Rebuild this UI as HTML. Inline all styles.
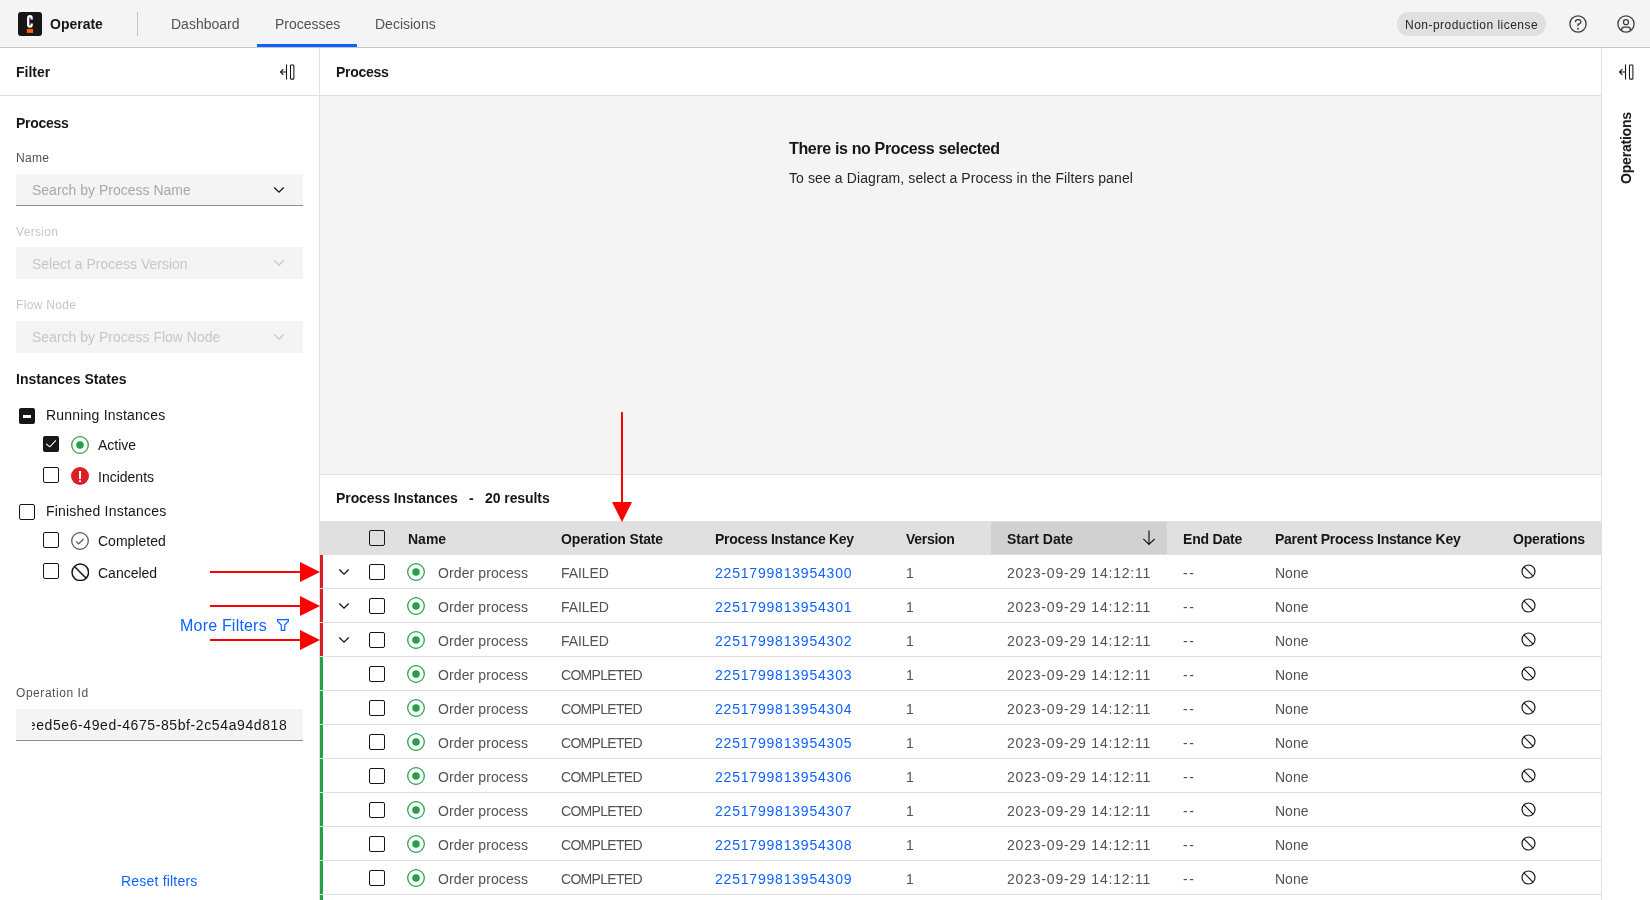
<!DOCTYPE html>
<html><head><meta charset="utf-8"><title>Operate</title>
<style>
html,body{margin:0;padding:0;width:1650px;height:900px;overflow:hidden;background:#fff;font-family:"Liberation Sans", sans-serif;}
.t{position:absolute;white-space:nowrap;will-change:transform;}
svg{display:block}
</style></head><body>
<div style="position:absolute;left:0;top:0;width:1650px;height:47px;background:#f4f4f4"></div>
<div style="position:absolute;left:0;top:47px;width:1650px;height:1px;background:#c6c6c6"></div>
<div style="position:absolute;left:18px;top:12px;width:24px;height:24px;background:#161616;border-radius:3px"></div>
<svg style="position:absolute;left:18px;top:12px" width="24" height="24" viewBox="0 0 24 24"><path d="M11.95 3.1c-1.9 0-2.9 1.2-2.9 3.3v6.1c0 2.1 1 3.3 2.9 3.3 1.9 0 2.9-1.2 2.9-3.3v-1.1h-2.3v1.3c0 .6-.2.9-.6.9s-.6-.3-.6-.9V6.2c0-.6.2-.9.6-.9s.6.3.6.9v1.4h2.3V6.4c0-2.1-1-3.3-2.9-3.3z" fill="#fff"/><rect x="8.9" y="16.9" width="6.2" height="4" fill="#fc5d0d"/></svg>
<div class="t" style="left:50px;top:14.15px;font-size:14px;line-height:20px;font-weight:700;color:#161616;letter-spacing:0px;">Operate</div>
<div style="position:absolute;left:137px;top:12px;width:1px;height:24px;background:#c6c6c6"></div>
<div class="t" style="left:171px;top:14.15px;font-size:14px;line-height:20px;font-weight:400;color:#525252;letter-spacing:0px;">Dashboard</div>
<div class="t" style="left:275px;top:14.15px;font-size:14px;line-height:20px;font-weight:400;color:#525252;letter-spacing:0px;">Processes</div>
<div class="t" style="left:375px;top:14.15px;font-size:14px;line-height:20px;font-weight:400;color:#525252;letter-spacing:0px;">Decisions</div>
<div style="position:absolute;left:257px;top:44px;width:100px;height:3px;background:#0f62fe"></div>
<div style="position:absolute;left:1397px;top:12px;width:149px;height:24px;background:#e0e0e0;border-radius:12px"></div>
<div class="t" style="left:1405px;top:17.34px;font-size:12px;line-height:16px;font-weight:400;color:#262626;letter-spacing:0.47px;">Non-production license</div>
<svg style="position:absolute;left:1568px;top:14px" width="20" height="20" viewBox="0 0 32 32" fill="#393939"><path d="M16,2A14,14,0,1,0,30,16,14,14,0,0,0,16,2Zm0,26A12,12,0,1,1,28,16,12,12,0,0,1,16,28Z"/><circle cx="16" cy="23.5" r="1.5"/><path d="M17,8H15.5A4.48,4.48,0,0,0,11,12.5V13h2v-.5A2.5,2.5,0,0,1,15.5,10H17a2.5,2.5,0,0,1,0,5H15v4.5h2V17a4.5,4.5,0,0,0,0-9Z"/></svg>
<svg style="position:absolute;left:1616px;top:14px" width="20" height="20" viewBox="0 0 32 32" fill="#393939"><path d="M16,8a5,5,0,1,0,5,5A5,5,0,0,0,16,8Zm0,8a3,3,0,1,1,3-3A3.0034,3.0034,0,0,1,16,16Z"/><path d="M16,2A14,14,0,1,0,30,16,14.0158,14.0158,0,0,0,16,2ZM10,26.3765V25a3.0033,3.0033,0,0,1,3-3h6a3.0033,3.0033,0,0,1,3,3v1.3765a11.8989,11.8989,0,0,1-12,0Zm13.9925-1.4507A5.0016,5.0016,0,0,0,19,20H13a5.0016,5.0016,0,0,0-4.9925,4.9258,12,12,0,1,1,15.985,0Z"/></svg>
<div style="position:absolute;left:0;top:48px;width:319px;height:852px;background:#fff"></div>
<div style="position:absolute;left:319px;top:48px;width:1px;height:852px;background:#e0e0e0"></div>
<div style="position:absolute;left:0;top:95px;width:319px;height:1px;background:#e0e0e0"></div>
<div class="t" style="left:16px;top:62.15px;font-size:14px;line-height:20px;font-weight:700;color:#161616;letter-spacing:0px;">Filter</div>
<svg style="position:absolute;left:280px;top:64px" width="16" height="16" viewBox="0 0 16 16" fill="none" stroke="#161616"><path d="M6.5 0.4v15.2" stroke-width="1.1"/><path d="M6.5 8H0.8M3.4 5.2L0.6 8l2.8 2.8" stroke-width="1.1"/><rect x="10.5" y="0.9" width="3.4" height="14.2" rx="0.6" stroke-width="1.05"/></svg>
<div class="t" style="left:16px;top:113.15px;font-size:14px;line-height:20px;font-weight:700;color:#161616;letter-spacing:-0.3px;">Process</div>
<div class="t" style="left:16px;top:150.24px;font-size:12px;line-height:16px;font-weight:400;color:#525252;letter-spacing:0.32px;">Name</div>
<div style="position:absolute;left:16px;top:174px;width:287px;height:31px;background:#f4f4f4;border-bottom:1px solid #8d8d8d"></div>
<div class="t" style="left:32px;top:179.75px;font-size:14px;line-height:20px;font-weight:400;color:#a8a8a8;letter-spacing:0px;">Search by Process Name</div>
<svg style="position:absolute;left:271px;top:182px" width="16" height="16" viewBox="0 0 16 16"><path d="M3.3 5.5L8 10.2l4.7-4.7" fill="none" stroke="#161616" stroke-width="1.3"/></svg>
<div class="t" style="left:16px;top:224.14px;font-size:12px;line-height:16px;font-weight:400;color:#c6c6c6;letter-spacing:0.32px;">Version</div>
<div style="position:absolute;left:16px;top:247px;width:287px;height:32px;background:#f4f4f4"></div>
<div class="t" style="left:32px;top:254.15px;font-size:14px;line-height:20px;font-weight:400;color:#c6c6c6;letter-spacing:0px;">Select a Process Version</div>
<svg style="position:absolute;left:271px;top:255px" width="16" height="16" viewBox="0 0 16 16"><path d="M3.3 5.5L8 10.2l4.7-4.7" fill="none" stroke="#c6c6c6" stroke-width="1.3"/></svg>
<div class="t" style="left:16px;top:297.44px;font-size:12px;line-height:16px;font-weight:400;color:#c6c6c6;letter-spacing:0.32px;">Flow Node</div>
<div style="position:absolute;left:16px;top:321px;width:287px;height:32px;background:#f4f4f4"></div>
<div class="t" style="left:32px;top:326.75px;font-size:14px;line-height:20px;font-weight:400;color:#c6c6c6;letter-spacing:0px;">Search by Process Flow Node</div>
<svg style="position:absolute;left:271px;top:329px" width="16" height="16" viewBox="0 0 16 16"><path d="M3.3 5.5L8 10.2l4.7-4.7" fill="none" stroke="#c6c6c6" stroke-width="1.3"/></svg>
<div class="t" style="left:16px;top:369.15px;font-size:14px;line-height:20px;font-weight:700;color:#161616;letter-spacing:0px;">Instances States</div>
<div style="position:absolute;left:19px;top:408px;width:16px;height:16px;background:#161616;border-radius:2px"></div><div style="position:absolute;left:23px;top:415px;width:8px;height:3px;background:#fff"></div>
<div class="t" style="left:46px;top:405.35px;font-size:14px;line-height:20px;font-weight:400;color:#161616;letter-spacing:0.2px;">Running Instances</div>
<div style="position:absolute;left:43px;top:436px;width:16px;height:16px;background:#161616;border-radius:2px"></div><svg style="position:absolute;left:43px;top:436px" width="16" height="16" viewBox="0 0 16 16"><path d="M3.2 8L6.8 10.9L12.9 4.3" fill="none" stroke="#fff" stroke-width="1.05"/></svg>
<svg style="position:absolute;left:71px;top:436px" width="18" height="18" viewBox="0 0 18 18"><circle cx="9" cy="9" r="8.3" fill="none" stroke="#24a148" stroke-width="1.25"/><circle cx="9" cy="9" r="3.75" fill="#24a148"/></svg>
<div class="t" style="left:98px;top:435.35px;font-size:14px;line-height:20px;font-weight:400;color:#161616;letter-spacing:0px;">Active</div>
<div style="position:absolute;left:43px;top:467px;width:14px;height:14px;border:1px solid #161616;border-radius:2px;background:transparent"></div>
<svg style="position:absolute;left:71px;top:467px" width="18" height="18" viewBox="0 0 18 18"><circle cx="9" cy="9" r="9" fill="#da1e28"/><rect x="8" y="4" width="2" height="8" fill="#fff"/><rect x="8" y="13.3" width="2" height="1.7" fill="#fff"/></svg>
<div class="t" style="left:98px;top:467.15px;font-size:14px;line-height:20px;font-weight:400;color:#161616;letter-spacing:0px;">Incidents</div>
<div style="position:absolute;left:19px;top:504px;width:14px;height:14px;border:1px solid #161616;border-radius:2px;background:transparent"></div>
<div class="t" style="left:46px;top:501.35px;font-size:14px;line-height:20px;font-weight:400;color:#161616;letter-spacing:0.2px;">Finished Instances</div>
<div style="position:absolute;left:43px;top:532px;width:14px;height:14px;border:1px solid #161616;border-radius:2px;background:transparent"></div>
<svg style="position:absolute;left:71px;top:532px" width="18" height="18" viewBox="0 0 18 18"><circle cx="9" cy="9" r="8.3" fill="none" stroke="#525252" stroke-width="1.2"/><path d="M5.2 9.3l2.5 2.5 4.8-4.8" fill="none" stroke="#525252" stroke-width="1.2"/></svg>
<div class="t" style="left:98px;top:531.05px;font-size:14px;line-height:20px;font-weight:400;color:#161616;letter-spacing:0px;">Completed</div>
<div style="position:absolute;left:43px;top:563px;width:14px;height:14px;border:1px solid #161616;border-radius:2px;background:transparent"></div>
<svg style="position:absolute;left:70.7px;top:562.7px" width="18.6" height="18.6" viewBox="0 0 18.6 18.6"><circle cx="9.3" cy="9.3" r="8.3" fill="none" stroke="#161616" stroke-width="1.5"/><path d="M3.431070000000001 3.431070000000001L15.16893 15.16893" stroke="#161616" stroke-width="1.5"/></svg>
<div class="t" style="left:98px;top:563.15px;font-size:14px;line-height:20px;font-weight:400;color:#161616;letter-spacing:0px;">Canceled</div>
<div class="t" style="left:180px;top:615.96px;font-size:16px;line-height:20px;font-weight:400;color:#0f62fe;letter-spacing:0.2px;">More Filters</div>
<svg style="position:absolute;left:275px;top:617px" width="16" height="16" viewBox="0 0 16 16"><path d="M2.6 2.6h10.8v1.6L9.7 8v5.4H6.3V8L2.6 4.2z" fill="none" stroke="#0f62fe" stroke-width="1.2" stroke-linejoin="miter"/></svg>
<div class="t" style="left:16px;top:685.04px;font-size:12px;line-height:16px;font-weight:400;color:#525252;letter-spacing:0.55px;">Operation Id</div>
<div style="position:absolute;left:16px;top:709px;width:287px;height:31px;background:#f4f4f4;border-bottom:1px solid #8d8d8d"></div>
<div style="position:absolute;left:32px;top:709px;width:255px;height:32px;overflow:hidden"><div class="t" style="left:0px;top:5.55px;font-size:14px;line-height:20px;font-weight:400;color:#161616;letter-spacing:0.6px;right:0;left:auto;">0aeed5e6-49ed-4675-85bf-2c54a94d818</div></div>
<div class="t" style="left:121px;top:870.95px;font-size:14px;line-height:20px;font-weight:400;color:#0f62fe;letter-spacing:0.2px;">Reset filters</div>
<div style="position:absolute;left:320px;top:48px;width:1281px;height:47px;background:#fff"></div>
<div style="position:absolute;left:320px;top:95px;width:1281px;height:1px;background:#e0e0e0"></div>
<div class="t" style="left:336px;top:62.15px;font-size:14px;line-height:20px;font-weight:700;color:#161616;letter-spacing:-0.3px;">Process</div>
<div style="position:absolute;left:320px;top:96px;width:1281px;height:378px;background:#f4f4f4"></div>
<div class="t" style="left:789px;top:139.46px;font-size:16px;line-height:20px;font-weight:700;color:#161616;letter-spacing:-0.35px;">There is no Process selected</div>
<div class="t" style="left:789px;top:167.85px;font-size:14px;line-height:20px;font-weight:400;color:#262626;letter-spacing:0.1px;">To see a Diagram, select a Process in the Filters panel</div>
<div style="position:absolute;left:320px;top:474px;width:1281px;height:1px;background:#e0e0e0"></div>
<div style="position:absolute;left:320px;top:475px;width:1281px;height:425px;background:#fff"></div>
<div class="t" style="left:336px;top:488.15px;font-size:14px;line-height:20px;font-weight:700;color:#161616;letter-spacing:-0.08px;">Process Instances&nbsp;&nbsp; - &nbsp;&nbsp;20 results</div>
<div style="position:absolute;left:320px;top:521px;width:1281px;height:34px;background:#e0e0e0"></div>
<div style="position:absolute;left:991px;top:522px;width:176px;height:32px;background:#d1d1d1"></div>
<div style="position:absolute;left:369px;top:530px;width:14px;height:14px;border:1px solid #161616;border-radius:2px;background:transparent"></div>
<div class="t" style="left:408px;top:529.05px;font-size:14px;line-height:20px;font-weight:700;color:#161616;letter-spacing:0px;">Name</div>
<div class="t" style="left:561px;top:529.05px;font-size:14px;line-height:20px;font-weight:700;color:#161616;letter-spacing:-0.15px;">Operation State</div>
<div class="t" style="left:715px;top:529.05px;font-size:14px;line-height:20px;font-weight:700;color:#161616;letter-spacing:-0.3px;">Process Instance Key</div>
<div class="t" style="left:906px;top:529.05px;font-size:14px;line-height:20px;font-weight:700;color:#161616;letter-spacing:-0.3px;">Version</div>
<div class="t" style="left:1007px;top:529.05px;font-size:14px;line-height:20px;font-weight:700;color:#161616;letter-spacing:0px;">Start Date</div>
<svg style="position:absolute;left:1141px;top:530px" width="16" height="16" viewBox="0 0 16 16"><path d="M8 0.5v14.3M2.3 8.8L8 14.5l5.7-5.7" fill="none" stroke="#161616" stroke-width="1.2"/></svg>
<div class="t" style="left:1183px;top:529.05px;font-size:14px;line-height:20px;font-weight:700;color:#161616;letter-spacing:-0.2px;">End Date</div>
<div class="t" style="left:1275px;top:529.05px;font-size:14px;line-height:20px;font-weight:700;color:#161616;letter-spacing:-0.25px;">Parent Process Instance Key</div>
<div class="t" style="left:1513px;top:529.05px;font-size:14px;line-height:20px;font-weight:700;color:#161616;letter-spacing:-0.2px;">Operations</div>
<div style="position:absolute;left:320px;top:588px;width:1281px;height:1px;background:#e0e0e0"></div>
<div style="position:absolute;left:320px;top:555px;width:3px;height:33px;background:#da1e28"></div>
<svg style="position:absolute;left:336px;top:563.5px" width="16" height="16" viewBox="0 0 16 16"><path d="M3.3 5.5L8 10.2l4.7-4.7" fill="none" stroke="#161616" stroke-width="1.3"/></svg>
<div style="position:absolute;left:369px;top:564px;width:14px;height:14px;border:1px solid #161616;border-radius:2px;background:transparent"></div>
<svg style="position:absolute;left:407px;top:563px" width="18" height="18" viewBox="0 0 18 18"><circle cx="9" cy="9" r="8.3" fill="none" stroke="#24a148" stroke-width="1.25"/><circle cx="9" cy="9" r="3.75" fill="#24a148"/></svg>
<div class="t" style="left:438px;top:563.15px;font-size:14px;line-height:20px;font-weight:400;color:#525252;letter-spacing:0.1px;">Order process</div>
<div class="t" style="left:561px;top:563.15px;font-size:14px;line-height:20px;font-weight:400;color:#525252;letter-spacing:-0.1px;">FAILED</div>
<div class="t" style="left:715px;top:563.15px;font-size:14px;line-height:20px;font-weight:400;color:#0f62fe;letter-spacing:0.8px;">2251799813954300</div>
<div class="t" style="left:906px;top:563.15px;font-size:14px;line-height:20px;font-weight:400;color:#525252;letter-spacing:0px;">1</div>
<div class="t" style="left:1007px;top:563.15px;font-size:14px;line-height:20px;font-weight:400;color:#525252;letter-spacing:0.8px;">2023-09-29 14:12:11</div>
<div class="t" style="left:1183px;top:563.15px;font-size:14px;line-height:20px;font-weight:400;color:#525252;letter-spacing:1.5px;">--</div>
<div class="t" style="left:1275px;top:563.15px;font-size:14px;line-height:20px;font-weight:400;color:#525252;letter-spacing:0px;">None</div>
<svg style="position:absolute;left:1521.0px;top:564.0px" width="15.0" height="15.0" viewBox="0 0 15.0 15.0"><circle cx="7.5" cy="7.5" r="6.5" fill="none" stroke="#161616" stroke-width="1.2"/><path d="M2.9038500000000003 2.9038500000000003L12.09615 12.09615" stroke="#161616" stroke-width="1.2"/></svg>
<div style="position:absolute;left:320px;top:622px;width:1281px;height:1px;background:#e0e0e0"></div>
<div style="position:absolute;left:320px;top:589px;width:3px;height:33px;background:#da1e28"></div>
<svg style="position:absolute;left:336px;top:597.5px" width="16" height="16" viewBox="0 0 16 16"><path d="M3.3 5.5L8 10.2l4.7-4.7" fill="none" stroke="#161616" stroke-width="1.3"/></svg>
<div style="position:absolute;left:369px;top:598px;width:14px;height:14px;border:1px solid #161616;border-radius:2px;background:transparent"></div>
<svg style="position:absolute;left:407px;top:597px" width="18" height="18" viewBox="0 0 18 18"><circle cx="9" cy="9" r="8.3" fill="none" stroke="#24a148" stroke-width="1.25"/><circle cx="9" cy="9" r="3.75" fill="#24a148"/></svg>
<div class="t" style="left:438px;top:597.15px;font-size:14px;line-height:20px;font-weight:400;color:#525252;letter-spacing:0.1px;">Order process</div>
<div class="t" style="left:561px;top:597.15px;font-size:14px;line-height:20px;font-weight:400;color:#525252;letter-spacing:-0.1px;">FAILED</div>
<div class="t" style="left:715px;top:597.15px;font-size:14px;line-height:20px;font-weight:400;color:#0f62fe;letter-spacing:0.8px;">2251799813954301</div>
<div class="t" style="left:906px;top:597.15px;font-size:14px;line-height:20px;font-weight:400;color:#525252;letter-spacing:0px;">1</div>
<div class="t" style="left:1007px;top:597.15px;font-size:14px;line-height:20px;font-weight:400;color:#525252;letter-spacing:0.8px;">2023-09-29 14:12:11</div>
<div class="t" style="left:1183px;top:597.15px;font-size:14px;line-height:20px;font-weight:400;color:#525252;letter-spacing:1.5px;">--</div>
<div class="t" style="left:1275px;top:597.15px;font-size:14px;line-height:20px;font-weight:400;color:#525252;letter-spacing:0px;">None</div>
<svg style="position:absolute;left:1521.0px;top:598.0px" width="15.0" height="15.0" viewBox="0 0 15.0 15.0"><circle cx="7.5" cy="7.5" r="6.5" fill="none" stroke="#161616" stroke-width="1.2"/><path d="M2.9038500000000003 2.9038500000000003L12.09615 12.09615" stroke="#161616" stroke-width="1.2"/></svg>
<div style="position:absolute;left:320px;top:656px;width:1281px;height:1px;background:#e0e0e0"></div>
<div style="position:absolute;left:320px;top:623px;width:3px;height:33px;background:#da1e28"></div>
<svg style="position:absolute;left:336px;top:631.5px" width="16" height="16" viewBox="0 0 16 16"><path d="M3.3 5.5L8 10.2l4.7-4.7" fill="none" stroke="#161616" stroke-width="1.3"/></svg>
<div style="position:absolute;left:369px;top:632px;width:14px;height:14px;border:1px solid #161616;border-radius:2px;background:transparent"></div>
<svg style="position:absolute;left:407px;top:631px" width="18" height="18" viewBox="0 0 18 18"><circle cx="9" cy="9" r="8.3" fill="none" stroke="#24a148" stroke-width="1.25"/><circle cx="9" cy="9" r="3.75" fill="#24a148"/></svg>
<div class="t" style="left:438px;top:631.15px;font-size:14px;line-height:20px;font-weight:400;color:#525252;letter-spacing:0.1px;">Order process</div>
<div class="t" style="left:561px;top:631.15px;font-size:14px;line-height:20px;font-weight:400;color:#525252;letter-spacing:-0.1px;">FAILED</div>
<div class="t" style="left:715px;top:631.15px;font-size:14px;line-height:20px;font-weight:400;color:#0f62fe;letter-spacing:0.8px;">2251799813954302</div>
<div class="t" style="left:906px;top:631.15px;font-size:14px;line-height:20px;font-weight:400;color:#525252;letter-spacing:0px;">1</div>
<div class="t" style="left:1007px;top:631.15px;font-size:14px;line-height:20px;font-weight:400;color:#525252;letter-spacing:0.8px;">2023-09-29 14:12:11</div>
<div class="t" style="left:1183px;top:631.15px;font-size:14px;line-height:20px;font-weight:400;color:#525252;letter-spacing:1.5px;">--</div>
<div class="t" style="left:1275px;top:631.15px;font-size:14px;line-height:20px;font-weight:400;color:#525252;letter-spacing:0px;">None</div>
<svg style="position:absolute;left:1521.0px;top:632.0px" width="15.0" height="15.0" viewBox="0 0 15.0 15.0"><circle cx="7.5" cy="7.5" r="6.5" fill="none" stroke="#161616" stroke-width="1.2"/><path d="M2.9038500000000003 2.9038500000000003L12.09615 12.09615" stroke="#161616" stroke-width="1.2"/></svg>
<div style="position:absolute;left:320px;top:690px;width:1281px;height:1px;background:#e0e0e0"></div>
<div style="position:absolute;left:320px;top:657px;width:3px;height:33px;background:#24a148"></div>
<div style="position:absolute;left:369px;top:666px;width:14px;height:14px;border:1px solid #161616;border-radius:2px;background:transparent"></div>
<svg style="position:absolute;left:407px;top:665px" width="18" height="18" viewBox="0 0 18 18"><circle cx="9" cy="9" r="8.3" fill="none" stroke="#24a148" stroke-width="1.25"/><circle cx="9" cy="9" r="3.75" fill="#24a148"/></svg>
<div class="t" style="left:438px;top:665.15px;font-size:14px;line-height:20px;font-weight:400;color:#525252;letter-spacing:0.1px;">Order process</div>
<div class="t" style="left:561px;top:665.15px;font-size:14px;line-height:20px;font-weight:400;color:#525252;letter-spacing:-0.7px;">COMPLETED</div>
<div class="t" style="left:715px;top:665.15px;font-size:14px;line-height:20px;font-weight:400;color:#0f62fe;letter-spacing:0.8px;">2251799813954303</div>
<div class="t" style="left:906px;top:665.15px;font-size:14px;line-height:20px;font-weight:400;color:#525252;letter-spacing:0px;">1</div>
<div class="t" style="left:1007px;top:665.15px;font-size:14px;line-height:20px;font-weight:400;color:#525252;letter-spacing:0.8px;">2023-09-29 14:12:11</div>
<div class="t" style="left:1183px;top:665.15px;font-size:14px;line-height:20px;font-weight:400;color:#525252;letter-spacing:1.5px;">--</div>
<div class="t" style="left:1275px;top:665.15px;font-size:14px;line-height:20px;font-weight:400;color:#525252;letter-spacing:0px;">None</div>
<svg style="position:absolute;left:1521.0px;top:666.0px" width="15.0" height="15.0" viewBox="0 0 15.0 15.0"><circle cx="7.5" cy="7.5" r="6.5" fill="none" stroke="#161616" stroke-width="1.2"/><path d="M2.9038500000000003 2.9038500000000003L12.09615 12.09615" stroke="#161616" stroke-width="1.2"/></svg>
<div style="position:absolute;left:320px;top:724px;width:1281px;height:1px;background:#e0e0e0"></div>
<div style="position:absolute;left:320px;top:691px;width:3px;height:33px;background:#24a148"></div>
<div style="position:absolute;left:369px;top:700px;width:14px;height:14px;border:1px solid #161616;border-radius:2px;background:transparent"></div>
<svg style="position:absolute;left:407px;top:699px" width="18" height="18" viewBox="0 0 18 18"><circle cx="9" cy="9" r="8.3" fill="none" stroke="#24a148" stroke-width="1.25"/><circle cx="9" cy="9" r="3.75" fill="#24a148"/></svg>
<div class="t" style="left:438px;top:699.15px;font-size:14px;line-height:20px;font-weight:400;color:#525252;letter-spacing:0.1px;">Order process</div>
<div class="t" style="left:561px;top:699.15px;font-size:14px;line-height:20px;font-weight:400;color:#525252;letter-spacing:-0.7px;">COMPLETED</div>
<div class="t" style="left:715px;top:699.15px;font-size:14px;line-height:20px;font-weight:400;color:#0f62fe;letter-spacing:0.8px;">2251799813954304</div>
<div class="t" style="left:906px;top:699.15px;font-size:14px;line-height:20px;font-weight:400;color:#525252;letter-spacing:0px;">1</div>
<div class="t" style="left:1007px;top:699.15px;font-size:14px;line-height:20px;font-weight:400;color:#525252;letter-spacing:0.8px;">2023-09-29 14:12:11</div>
<div class="t" style="left:1183px;top:699.15px;font-size:14px;line-height:20px;font-weight:400;color:#525252;letter-spacing:1.5px;">--</div>
<div class="t" style="left:1275px;top:699.15px;font-size:14px;line-height:20px;font-weight:400;color:#525252;letter-spacing:0px;">None</div>
<svg style="position:absolute;left:1521.0px;top:700.0px" width="15.0" height="15.0" viewBox="0 0 15.0 15.0"><circle cx="7.5" cy="7.5" r="6.5" fill="none" stroke="#161616" stroke-width="1.2"/><path d="M2.9038500000000003 2.9038500000000003L12.09615 12.09615" stroke="#161616" stroke-width="1.2"/></svg>
<div style="position:absolute;left:320px;top:758px;width:1281px;height:1px;background:#e0e0e0"></div>
<div style="position:absolute;left:320px;top:725px;width:3px;height:33px;background:#24a148"></div>
<div style="position:absolute;left:369px;top:734px;width:14px;height:14px;border:1px solid #161616;border-radius:2px;background:transparent"></div>
<svg style="position:absolute;left:407px;top:733px" width="18" height="18" viewBox="0 0 18 18"><circle cx="9" cy="9" r="8.3" fill="none" stroke="#24a148" stroke-width="1.25"/><circle cx="9" cy="9" r="3.75" fill="#24a148"/></svg>
<div class="t" style="left:438px;top:733.15px;font-size:14px;line-height:20px;font-weight:400;color:#525252;letter-spacing:0.1px;">Order process</div>
<div class="t" style="left:561px;top:733.15px;font-size:14px;line-height:20px;font-weight:400;color:#525252;letter-spacing:-0.7px;">COMPLETED</div>
<div class="t" style="left:715px;top:733.15px;font-size:14px;line-height:20px;font-weight:400;color:#0f62fe;letter-spacing:0.8px;">2251799813954305</div>
<div class="t" style="left:906px;top:733.15px;font-size:14px;line-height:20px;font-weight:400;color:#525252;letter-spacing:0px;">1</div>
<div class="t" style="left:1007px;top:733.15px;font-size:14px;line-height:20px;font-weight:400;color:#525252;letter-spacing:0.8px;">2023-09-29 14:12:11</div>
<div class="t" style="left:1183px;top:733.15px;font-size:14px;line-height:20px;font-weight:400;color:#525252;letter-spacing:1.5px;">--</div>
<div class="t" style="left:1275px;top:733.15px;font-size:14px;line-height:20px;font-weight:400;color:#525252;letter-spacing:0px;">None</div>
<svg style="position:absolute;left:1521.0px;top:734.0px" width="15.0" height="15.0" viewBox="0 0 15.0 15.0"><circle cx="7.5" cy="7.5" r="6.5" fill="none" stroke="#161616" stroke-width="1.2"/><path d="M2.9038500000000003 2.9038500000000003L12.09615 12.09615" stroke="#161616" stroke-width="1.2"/></svg>
<div style="position:absolute;left:320px;top:792px;width:1281px;height:1px;background:#e0e0e0"></div>
<div style="position:absolute;left:320px;top:759px;width:3px;height:33px;background:#24a148"></div>
<div style="position:absolute;left:369px;top:768px;width:14px;height:14px;border:1px solid #161616;border-radius:2px;background:transparent"></div>
<svg style="position:absolute;left:407px;top:767px" width="18" height="18" viewBox="0 0 18 18"><circle cx="9" cy="9" r="8.3" fill="none" stroke="#24a148" stroke-width="1.25"/><circle cx="9" cy="9" r="3.75" fill="#24a148"/></svg>
<div class="t" style="left:438px;top:767.15px;font-size:14px;line-height:20px;font-weight:400;color:#525252;letter-spacing:0.1px;">Order process</div>
<div class="t" style="left:561px;top:767.15px;font-size:14px;line-height:20px;font-weight:400;color:#525252;letter-spacing:-0.7px;">COMPLETED</div>
<div class="t" style="left:715px;top:767.15px;font-size:14px;line-height:20px;font-weight:400;color:#0f62fe;letter-spacing:0.8px;">2251799813954306</div>
<div class="t" style="left:906px;top:767.15px;font-size:14px;line-height:20px;font-weight:400;color:#525252;letter-spacing:0px;">1</div>
<div class="t" style="left:1007px;top:767.15px;font-size:14px;line-height:20px;font-weight:400;color:#525252;letter-spacing:0.8px;">2023-09-29 14:12:11</div>
<div class="t" style="left:1183px;top:767.15px;font-size:14px;line-height:20px;font-weight:400;color:#525252;letter-spacing:1.5px;">--</div>
<div class="t" style="left:1275px;top:767.15px;font-size:14px;line-height:20px;font-weight:400;color:#525252;letter-spacing:0px;">None</div>
<svg style="position:absolute;left:1521.0px;top:768.0px" width="15.0" height="15.0" viewBox="0 0 15.0 15.0"><circle cx="7.5" cy="7.5" r="6.5" fill="none" stroke="#161616" stroke-width="1.2"/><path d="M2.9038500000000003 2.9038500000000003L12.09615 12.09615" stroke="#161616" stroke-width="1.2"/></svg>
<div style="position:absolute;left:320px;top:826px;width:1281px;height:1px;background:#e0e0e0"></div>
<div style="position:absolute;left:320px;top:793px;width:3px;height:33px;background:#24a148"></div>
<div style="position:absolute;left:369px;top:802px;width:14px;height:14px;border:1px solid #161616;border-radius:2px;background:transparent"></div>
<svg style="position:absolute;left:407px;top:801px" width="18" height="18" viewBox="0 0 18 18"><circle cx="9" cy="9" r="8.3" fill="none" stroke="#24a148" stroke-width="1.25"/><circle cx="9" cy="9" r="3.75" fill="#24a148"/></svg>
<div class="t" style="left:438px;top:801.15px;font-size:14px;line-height:20px;font-weight:400;color:#525252;letter-spacing:0.1px;">Order process</div>
<div class="t" style="left:561px;top:801.15px;font-size:14px;line-height:20px;font-weight:400;color:#525252;letter-spacing:-0.7px;">COMPLETED</div>
<div class="t" style="left:715px;top:801.15px;font-size:14px;line-height:20px;font-weight:400;color:#0f62fe;letter-spacing:0.8px;">2251799813954307</div>
<div class="t" style="left:906px;top:801.15px;font-size:14px;line-height:20px;font-weight:400;color:#525252;letter-spacing:0px;">1</div>
<div class="t" style="left:1007px;top:801.15px;font-size:14px;line-height:20px;font-weight:400;color:#525252;letter-spacing:0.8px;">2023-09-29 14:12:11</div>
<div class="t" style="left:1183px;top:801.15px;font-size:14px;line-height:20px;font-weight:400;color:#525252;letter-spacing:1.5px;">--</div>
<div class="t" style="left:1275px;top:801.15px;font-size:14px;line-height:20px;font-weight:400;color:#525252;letter-spacing:0px;">None</div>
<svg style="position:absolute;left:1521.0px;top:802.0px" width="15.0" height="15.0" viewBox="0 0 15.0 15.0"><circle cx="7.5" cy="7.5" r="6.5" fill="none" stroke="#161616" stroke-width="1.2"/><path d="M2.9038500000000003 2.9038500000000003L12.09615 12.09615" stroke="#161616" stroke-width="1.2"/></svg>
<div style="position:absolute;left:320px;top:860px;width:1281px;height:1px;background:#e0e0e0"></div>
<div style="position:absolute;left:320px;top:827px;width:3px;height:33px;background:#24a148"></div>
<div style="position:absolute;left:369px;top:836px;width:14px;height:14px;border:1px solid #161616;border-radius:2px;background:transparent"></div>
<svg style="position:absolute;left:407px;top:835px" width="18" height="18" viewBox="0 0 18 18"><circle cx="9" cy="9" r="8.3" fill="none" stroke="#24a148" stroke-width="1.25"/><circle cx="9" cy="9" r="3.75" fill="#24a148"/></svg>
<div class="t" style="left:438px;top:835.15px;font-size:14px;line-height:20px;font-weight:400;color:#525252;letter-spacing:0.1px;">Order process</div>
<div class="t" style="left:561px;top:835.15px;font-size:14px;line-height:20px;font-weight:400;color:#525252;letter-spacing:-0.7px;">COMPLETED</div>
<div class="t" style="left:715px;top:835.15px;font-size:14px;line-height:20px;font-weight:400;color:#0f62fe;letter-spacing:0.8px;">2251799813954308</div>
<div class="t" style="left:906px;top:835.15px;font-size:14px;line-height:20px;font-weight:400;color:#525252;letter-spacing:0px;">1</div>
<div class="t" style="left:1007px;top:835.15px;font-size:14px;line-height:20px;font-weight:400;color:#525252;letter-spacing:0.8px;">2023-09-29 14:12:11</div>
<div class="t" style="left:1183px;top:835.15px;font-size:14px;line-height:20px;font-weight:400;color:#525252;letter-spacing:1.5px;">--</div>
<div class="t" style="left:1275px;top:835.15px;font-size:14px;line-height:20px;font-weight:400;color:#525252;letter-spacing:0px;">None</div>
<svg style="position:absolute;left:1521.0px;top:836.0px" width="15.0" height="15.0" viewBox="0 0 15.0 15.0"><circle cx="7.5" cy="7.5" r="6.5" fill="none" stroke="#161616" stroke-width="1.2"/><path d="M2.9038500000000003 2.9038500000000003L12.09615 12.09615" stroke="#161616" stroke-width="1.2"/></svg>
<div style="position:absolute;left:320px;top:894px;width:1281px;height:1px;background:#e0e0e0"></div>
<div style="position:absolute;left:320px;top:861px;width:3px;height:33px;background:#24a148"></div>
<div style="position:absolute;left:369px;top:870px;width:14px;height:14px;border:1px solid #161616;border-radius:2px;background:transparent"></div>
<svg style="position:absolute;left:407px;top:869px" width="18" height="18" viewBox="0 0 18 18"><circle cx="9" cy="9" r="8.3" fill="none" stroke="#24a148" stroke-width="1.25"/><circle cx="9" cy="9" r="3.75" fill="#24a148"/></svg>
<div class="t" style="left:438px;top:869.15px;font-size:14px;line-height:20px;font-weight:400;color:#525252;letter-spacing:0.1px;">Order process</div>
<div class="t" style="left:561px;top:869.15px;font-size:14px;line-height:20px;font-weight:400;color:#525252;letter-spacing:-0.7px;">COMPLETED</div>
<div class="t" style="left:715px;top:869.15px;font-size:14px;line-height:20px;font-weight:400;color:#0f62fe;letter-spacing:0.8px;">2251799813954309</div>
<div class="t" style="left:906px;top:869.15px;font-size:14px;line-height:20px;font-weight:400;color:#525252;letter-spacing:0px;">1</div>
<div class="t" style="left:1007px;top:869.15px;font-size:14px;line-height:20px;font-weight:400;color:#525252;letter-spacing:0.8px;">2023-09-29 14:12:11</div>
<div class="t" style="left:1183px;top:869.15px;font-size:14px;line-height:20px;font-weight:400;color:#525252;letter-spacing:1.5px;">--</div>
<div class="t" style="left:1275px;top:869.15px;font-size:14px;line-height:20px;font-weight:400;color:#525252;letter-spacing:0px;">None</div>
<svg style="position:absolute;left:1521.0px;top:870.0px" width="15.0" height="15.0" viewBox="0 0 15.0 15.0"><circle cx="7.5" cy="7.5" r="6.5" fill="none" stroke="#161616" stroke-width="1.2"/><path d="M2.9038500000000003 2.9038500000000003L12.09615 12.09615" stroke="#161616" stroke-width="1.2"/></svg>
<div style="position:absolute;left:320px;top:928px;width:1281px;height:1px;background:#e0e0e0"></div>
<div style="position:absolute;left:320px;top:895px;width:3px;height:33px;background:#24a148"></div>
<div style="position:absolute;left:369px;top:904px;width:14px;height:14px;border:1px solid #161616;border-radius:2px;background:transparent"></div>
<svg style="position:absolute;left:407px;top:903px" width="18" height="18" viewBox="0 0 18 18"><circle cx="9" cy="9" r="8.3" fill="none" stroke="#24a148" stroke-width="1.25"/><circle cx="9" cy="9" r="3.75" fill="#24a148"/></svg>
<div class="t" style="left:438px;top:903.15px;font-size:14px;line-height:20px;font-weight:400;color:#525252;letter-spacing:0.1px;">Order process</div>
<div class="t" style="left:561px;top:903.15px;font-size:14px;line-height:20px;font-weight:400;color:#525252;letter-spacing:-0.7px;">COMPLETED</div>
<div class="t" style="left:715px;top:903.15px;font-size:14px;line-height:20px;font-weight:400;color:#0f62fe;letter-spacing:0.8px;">2251799813954310</div>
<div class="t" style="left:906px;top:903.15px;font-size:14px;line-height:20px;font-weight:400;color:#525252;letter-spacing:0px;">1</div>
<div class="t" style="left:1007px;top:903.15px;font-size:14px;line-height:20px;font-weight:400;color:#525252;letter-spacing:0.8px;">2023-09-29 14:12:11</div>
<div class="t" style="left:1183px;top:903.15px;font-size:14px;line-height:20px;font-weight:400;color:#525252;letter-spacing:1.5px;">--</div>
<div class="t" style="left:1275px;top:903.15px;font-size:14px;line-height:20px;font-weight:400;color:#525252;letter-spacing:0px;">None</div>
<svg style="position:absolute;left:1521.0px;top:904.0px" width="15.0" height="15.0" viewBox="0 0 15.0 15.0"><circle cx="7.5" cy="7.5" r="6.5" fill="none" stroke="#161616" stroke-width="1.2"/><path d="M2.9038500000000003 2.9038500000000003L12.09615 12.09615" stroke="#161616" stroke-width="1.2"/></svg>
<div style="position:absolute;left:1601px;top:48px;width:1px;height:852px;background:#e0e0e0"></div>
<div style="position:absolute;left:1602px;top:48px;width:48px;height:852px;background:#fff"></div>
<svg style="position:absolute;left:1619px;top:64px" width="16" height="16" viewBox="0 0 16 16" fill="none" stroke="#161616"><path d="M6.5 0.4v15.2" stroke-width="1.1"/><path d="M6.5 8H0.8M3.4 5.2L0.6 8l2.8 2.8" stroke-width="1.1"/><rect x="10.5" y="0.9" width="3.4" height="14.2" rx="0.6" stroke-width="1.05"/></svg>
<div class="t" style="left:1626px;top:148px;font-size:14px;line-height:20px;font-weight:700;color:#161616;letter-spacing:-0.2px;transform:translate(-50%,-50%) rotate(-90deg);">Operations</div>
<svg style="position:absolute;left:0;top:0" width="1650" height="900" viewBox="0 0 1650 900"><g fill="#ff0000" stroke="none"><rect x="621" y="412" width="2" height="91"/><path d="M612 502h20l-10 20z"/><rect x="210" y="571" width="91" height="2"/><path d="M300 562v20l20-10z"/><rect x="210" y="605" width="91" height="2"/><path d="M300 596v20l20-10z"/><rect x="210" y="639" width="91" height="2"/><path d="M300 630v20l20-10z"/></g></svg>
</body></html>
